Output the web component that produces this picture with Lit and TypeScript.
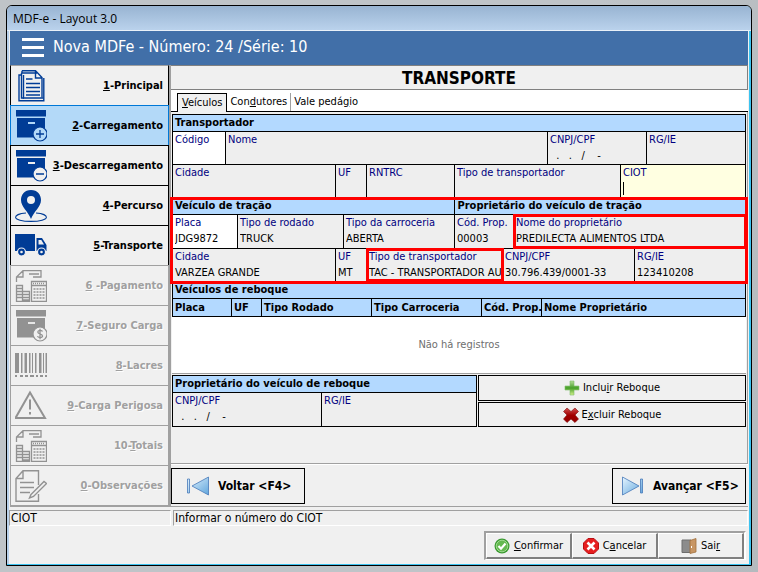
import { LitElement, html, css, svg, nothing, TemplateResult } from "lit";
import { customElement, property, state } from "lit/decorators.js";
import { classMap } from "lit/directives/class-map.js";

/* ---------- icons ---------- */

const calculatorIcon = svg`
  <g fill="none" stroke="currentColor" stroke-width="1.3">
    <path d="M1.5 12V7L8 .7H26V7H18M1.5 7H8V.7M14 4h10M19 7h7"/>
    <path d="M16.5 11.500h15v20h-15zM16.5 15.500h15"/>
    <path d="M1.5 15.500h6v16h-6zM1.5 18.500h6M1.5 21.500h6M1.5 24.500h13M1.5 27.500h13M7.5 21.500h7v10h-13M7.5 30h7"/>
    <path stroke-dasharray="2 1" d="M18.5 19h12M18.5 22h12M18.5 25h12M18.5 28h12"/>
    <path stroke-dasharray="1 1" d="M18 13.500h12"/>
  </g>`;

const box = svg`
  <path fill="currentColor" d="M1 0h30v6.500H1zM2 8h28v19.500H2z"/>
  <path stroke="var(--paper)" stroke-width="1.800" d="M13 13h7"/>`;

const badge = svg`<circle cx="25" cy="24" r="7" fill="var(--paper)" stroke="currentColor" stroke-width="1.200"/>`;

const icons: Record<string, TemplateResult> = {
  documents: svg`
    <g fill="none" stroke="currentColor" stroke-width="1.400">
      <path d="M7 .7H20.500L27 7.500V27.500M20.500 .7V8H27M7 .7V3"/>
      <path d="M22 3H6.500M6.500 3V28H9M6.500 5H4V30.800H28.800V8"/>
      <path d="M8.500 5V28H28.500"/>
      <path d="M11 9h6.500M11 13.500h14M11 17.500h14M11 21.500h14M11 25h14"/>
    </g>`,
  boxPlus: svg`${box}${badge}<path stroke="currentColor" stroke-width="1.300" d="M21 24h8M25 20v8"/>`,
  boxMinus: svg`${box}${badge}<path stroke="currentColor" stroke-width="1.300" d="M21 24h8"/>`,
  boxMoney: svg`${box}${badge}
    <path fill="none" stroke="currentColor" stroke-width="1.300" d="M27.500 21.500C27 20 22.800 20 22.800 22C22.800 24.500 27.500 23.500 27.500 26C27.500 28 23 28 22.500 26.200M25 18.800v10.400"/>`,
  pin: svg`
    <path fill="currentColor" fill-rule="evenodd" d="M16 0C9.500 0 6 4.800 6 10C6 17 13 21 16 29C19 21 26 17 26 10C26 4.800 22.500 0 16 0zM16 6a4 4 0 1 1 0 8a4 4 0 1 1 0-8z"/>
    <path fill="none" stroke="currentColor" stroke-width="1.100" d="M11 23C4 23.500 .600 25.500 .600 27.200C.600 29.500 7 31.400 16 31.400S31.400 29.500 31.400 27.200C31.400 25.500 28 23.500 21 23"/>`,
  truck: svg`
    <path fill="currentColor" d="M0 4h20v17H0zM21.500 8h5.500l4.500 7v6H21.500z"/>
    <path fill="var(--paper)" d="M23.500 10h2.800l2.700 4.500h-5.500z"/>
    <g fill="currentColor" stroke="var(--paper)" stroke-width="1.200"><circle cx="6.500" cy="22" r="4"/><circle cx="26.500" cy="22" r="4"/></g>
    <g fill="var(--paper)"><circle cx="6.500" cy="22" r="1.300"/><circle cx="26.500" cy="22" r="1.300"/></g>`,
  barcode: svg`
    <path fill="currentColor" d="M0 3h4v20H0zM6 3h1.500v20H6zM9.500 3h2.500v20H9.500zM14 3h1.500v20H14zM17 3h1v20h-1zM20 3h1.500v20H20zM24 3h2.500v20H24zM28 3h1v20h-1zM30.500 3h1.500v20h-1.500z"/>
    <path fill="currentColor" d="M0 25h2v2H0zM5 25h3v2H5zM10 25h3v2h-3zM15 25h4v2h-4zM21 25h2v2h-2zM25 25h3v2h-3zM30 25h2v2h-2z"/>`,
  warning: svg`
    <path fill="none" stroke="currentColor" stroke-width="2" d="M15 2.500L30 28H0.500Z"/>
    <path stroke="currentColor" stroke-width="2" d="M15 9.500v10M15 22v2.500"/>`,
  calculator: calculatorIcon,
  note: svg`
    <g fill="none" stroke="currentColor" stroke-width="1.400">
      <path d="M23.500 15V.800H8L1 8.500V31.300H23.500V24M8 .800V8.500H1"/>
      <path d="M5 12.500h14M5 17.500h14M5 22.500h10"/>
      <path d="M16 24.500L29 11.500L31.500 13.500L18.500 26.500L14.500 28z"/>
    </g>`,
};

/* ---------- data ---------- */

interface Step { before?: string; key: string; label: string; icon: string; enabled: boolean; }

const steps: Step[] = [
  { key: "1", label: "-Principal", icon: "documents", enabled: true },
  { key: "2", label: "-Carregamento", icon: "boxPlus", enabled: true },
  { key: "3", label: "-Descarregamento", icon: "boxMinus", enabled: true },
  { key: "4", label: "-Percurso", icon: "pin", enabled: true },
  { key: "5", label: "-Transporte", icon: "truck", enabled: true },
  { key: "6", label: " -Pagamento", icon: "calculator", enabled: false },
  { key: "7", label: "-Seguro Carga", icon: "boxMoney", enabled: false },
  { key: "8", label: "-Lacres", icon: "barcode", enabled: false },
  { key: "9", label: "-Carga Perigosa", icon: "warning", enabled: false },
  { before: "10-", key: "T", label: "otais", icon: "calculator", enabled: false },
  { key: "0", label: "-Observações", icon: "note", enabled: false },
];

interface Field { id: string; label: string; value?: string; editable?: boolean; focused?: boolean; marked?: boolean; }

const EMPTY_TAX_ID = "  .   .   /    -";

const carrierId: Field[] = [
  { id: "t-codigo", label: "Código", editable: true },
  { id: "t-nome", label: "Nome" },
  { id: "t-cnpj", label: "CNPJ/CPF", value: EMPTY_TAX_ID },
  { id: "t-rg", label: "RG/IE" },
];
const carrierData: Field[] = [
  { id: "t-cidade", label: "Cidade" },
  { id: "t-uf", label: "UF" },
  { id: "t-rntrc", label: "RNTRC" },
  { id: "t-tipo", label: "Tipo de transportador" },
  { id: "t-ciot", label: "CIOT", editable: true, focused: true },
];
const tractionVehicle: Field[] = [
  { id: "v-placa", label: "Placa", value: "JDG9872", editable: true },
  { id: "v-rodado", label: "Tipo de rodado", value: "TRUCK" },
  { id: "v-carroceria", label: "Tipo da carroceria", value: "ABERTA" },
  { id: "v-cod", label: "Cód. Prop.", value: "00003" },
  { id: "v-nome", label: "Nome do proprietário", value: "PREDILECTA ALIMENTOS LTDA", marked: true },
];
const tractionOwner: Field[] = [
  { id: "v-cidade", label: "Cidade", value: "VARZEA GRANDE" },
  { id: "v-uf", label: "UF", value: "MT" },
  { id: "v-tipo", label: "Tipo de transportador", value: "TAC - TRANSPORTADOR AU", marked: true },
  { id: "v-cnpj", label: "CNPJ/CPF", value: "30.796.439/0001-33" },
  { id: "v-rg", label: "RG/IE", value: "123410208" },
];
const trailerOwner: Field[] = [
  { id: "r-cnpj", label: "CNPJ/CPF", value: EMPTY_TAX_ID },
  { id: "r-rg", label: "RG/IE" },
];

/* ---------- sidebar ---------- */

@customElement("step-list")
export class StepList extends LitElement {
  @state() private current = 1;

  static styles = css`
    :host { display: block; }
    nav { display: flex; flex-direction: column; height: 100%; border-bottom: 1px solid #a0a0a0; box-sizing: border-box; }
    .step {
      --paper: #f0f0f0;
      display: flex; align-items: center; justify-content: space-between;
      height: 40px; flex: none; box-sizing: border-box; padding: 0 5px 0 4px; margin: 0;
      background: var(--paper); color: #003c96;
      border: 1px solid #000; border-bottom: 0;
      font: bold 11px/16px "DejaVu Sans Condensed", "DejaVu Sans", sans-serif;
    }
    .step:first-child { border-top-color: #a0a0a0; }
    .step.current { --paper: #b3d9f8; border-color: #0078d7; }
    .step:disabled { color: #929292; border-color: #a0a0a0; }
    .icon { width: 32px; height: 32px; flex: none; }
    .text { color: #000; white-space: pre; }
    .step:disabled .text { color: #a0a0a0; text-shadow: 1px 1px #fff; }
  `;

  render() {
    return html`<nav aria-label="Etapas">
      ${steps.map((s, i) => html`
        <button class=${classMap({ step: true, current: i === this.current })}
          ?disabled=${!s.enabled} @click=${() => (this.current = i)}>
          <svg class="icon" viewBox="0 0 32 32" aria-hidden="true">${icons[s.icon]}</svg>
          <span class="text">${s.before ?? nothing}<u>${s.key}</u>${s.label}</span>
        </button>`)}
    </nav>`;
  }
}

/* ---------- row of labelled fields ---------- */

@customElement("field-row")
export class FieldRow extends LitElement {
  @property({ attribute: false }) fields: Field[] = [];

  static styles = css`
    :host { display: grid; border-right: 1px solid #000; border-bottom: 1px solid #000; }
    .field {
      position: relative; min-width: 0; height: var(--field-height, 32px); box-sizing: border-box; padding-left: 2px;
      border-left: 1px solid #000; background: #eee;
    }
    .field.editable { background: #fff; }
    .field.focused { background: #ffffe1; }
    .marked { z-index: 1; }
    .marked::after {
      content: ""; position: absolute; inset: -1px -2px -1px -1px; border: 3px solid #f00; pointer-events: none;
    }
    label, input { display: block; font: 11px/16px "DejaVu Sans Condensed", "DejaVu Sans", sans-serif; height: 16px; white-space: pre; }
    label { color: #000080; }
    input { width: 100%; padding: 0; margin: 0; border: 0; background: none; color: #000; outline: none; height: 15px; }
    .caret { position: absolute; left: 2px; top: 17px; width: 1px; height: 13px; background: #000; }
  `;

  render() {
    return this.fields.map((f) => html`
      <div class=${classMap({ field: true, editable: !!f.editable, focused: !!f.focused, marked: !!f.marked })}>
        <label for=${f.id}>${f.label}</label>
        <input id=${f.id} .value=${f.value ?? ""} ?readonly=${!f.editable}>
        ${f.focused ? html`<span class="caret"></span>` : nothing}
      </div>`);
  }
}

/* ---------- application window ---------- */

@customElement("app-root")
export class AppRoot extends LitElement {
  static styles = css`
    :host {
      display: flex; box-sizing: border-box; min-height: 100vh; padding: 5px 6px 6px;
      background: linear-gradient(100deg, #bfc4c8 70%, #b4babe);
      font: 11px/16px "DejaVu Sans Condensed", "DejaVu Sans", sans-serif; color: #000;
    }
    button { font: inherit; color: inherit; margin: 0; cursor: default; }
    h1, h2 { margin: 0; font-weight: bold; }
    .window {
      flex: 1; min-width: 0; display: flex; flex-direction: column; box-sizing: border-box;
      border: 1px solid #000; border-radius: 6px 6px 0 0; background: #f0f0f0;
      box-shadow: inset -2px -1px #3cc3f0, inset 2px 0 #b9d1ea; overflow: hidden;
    }
    .titlebar {
      height: 24px; padding: 0 6px; background: linear-gradient(#98b4d2, #bad2ec);
      font: 12px/26px "Open Sans", "Noto Sans", sans-serif; border-bottom: 1px solid #e8f0f8;
    }
    .banner {
      display: flex; align-items: center; gap: 9px; height: 34px; margin: 0 3px; padding: 0 12px;
      background: #416fa8; color: #fff; box-sizing: border-box;
      font: 16px/30px "DejaVu Sans Condensed", "DejaVu Sans", sans-serif;
    }
    .banner-title { padding-bottom: 2px; }
    .menu { display: flex; padding: 0; border: 0; background: none; }
    .menu svg { width: 22px; height: 20px; }
    .body { display: grid; grid-template-columns: 159px minmax(0, 1fr); margin: 0 3px; border-bottom: 1px solid #a0a0a0; }
    .main { display: flex; flex-direction: column; border-left: 2px solid #a0a0a0; }
    .heading {
      height: 25px; box-sizing: border-box; border: 1px solid #808080; border-left: 0; text-align: center;
      font-size: 17px; line-height: 24px;
    }
    .tabs { display: flex; align-items: flex-end; height: 22px; box-sizing: border-box; padding-left: 6px; background: #fff; border-bottom: 1px solid #000; }
    .tab { height: 18px; padding: 0 3px; border: 0; background: none; line-height: 16px; }
    .tab.active { height: 19px; padding: 0 4px; margin-bottom: -1px; border: 1px solid #000; border-bottom: 0; background: #f0f0f0; }
    .tab.divided { border-left: 1px solid #a0a0a0; }
    .page { height: 352px; box-sizing: border-box; padding: 2px 1px 0; border-right: 1px solid #a0a0a0; border-bottom: 1px solid #a0a0a0; }
    .section { display: flex; height: 16px; border: 1px solid #000; background: #b3d9ff; }
    .section h2 { font-size: 11px; line-height: 16px; padding-left: 2px; }
    .carrier-id { grid-template-columns: 53fr 322fr 99fr 99fr; }
    .carrier-data { grid-template-columns: 163fr 31fr 88fr 166fr 125fr; }
    .vehicle { grid-template-columns: 65fr 106fr 111fr 59fr 232fr; --field-height: 33px; }
    .owner { grid-template-columns: 163fr 31fr 136fr 132fr 111fr; }
    .trailer-data { grid-template-columns: 149fr 155fr; --field-height: 33px; }
    .traction { position: relative; }
    .traction::after { content: ""; position: absolute; z-index: 2; inset: -1px -2px -2px; border: 3px solid #f00; pointer-events: none; }
    .section.split { display: grid; grid-template-columns: 281fr 290fr; }
    .split h2 + h2 { border-left: 1px solid #000; }
    .merged { border-top: 0; }
    table { width: 100%; table-layout: fixed; border-spacing: 0; background: #fff; border-bottom: 1px solid #a0a0a0; }
    th {
      height: 17px; padding: 0 0 0 2px; box-sizing: content-box; text-align: left; white-space: nowrap;
      font-size: 11px; line-height: 17px; background: #b3d9ff; border-left: 1px solid #000; border-bottom: 1px solid #000;
    }
    th:last-child { border-right: 1px solid #000; }
    td { height: 56px; padding: 0; text-align: center; color: #6e6e6e; }
    .c-plate { width: 59px; } .c-uf { width: 30px; } .c-type { width: 110px; } .c-code { width: 60px; }
    .trailer { display: grid; grid-template-columns: 305fr 268fr; column-gap: 1px; margin-top: 1px; }
    .actions { display: grid; row-gap: 1px; grid-template-rows: 26px 25px; }
    .action { display: flex; align-items: center; justify-content: center; gap: 3px; padding: 0; border: 1px solid #000; background: #f0f0f0; }
    .pager { display: flex; justify-content: space-between; padding: 3px 2px 2px 0; border-top: 1px solid #fff; }
    .page-btn {
      display: flex; align-items: center; gap: 8px; height: 36px; box-sizing: border-box;
      width: 134px; padding: 0 0 0 14px; border: 1px solid #000; background: #f0f0f0; font-weight: bold; font-size: 12px;
    }
    .page-btn.next { padding-left: 8px; }
    .i16 { width: 16px; height: 16px; flex: none; }
    .i24 { width: 24px; height: 24px; flex: none; }
    .status { display: grid; grid-template-columns: 162px minmax(0, 1fr); column-gap: 2px; margin: 3px 3px 0 2px; }
    .status output {
      height: 16px; box-sizing: border-box; padding-left: 1px; font-size: 12px; line-height: 14px;
      border: 1px solid #a0a0a0; border-right-color: #fff; border-bottom-color: #fff;
    }
    .footer { display: flex; justify-content: flex-end; padding: 5px; }
    .group { display: grid; grid-template-columns: repeat(3, 86px); border: 2px solid #a0a0a0; border-right: 2px solid #fff; border-bottom: 1px solid #fff; }
    .cmd {
      display: flex; align-items: center; justify-content: center; gap: 4px; height: 26px; padding: 0; box-sizing: border-box;
      background: #f0f0f0; border: 1px solid #fff; border-right: 2px solid #808080; border-bottom: 2px solid #808080;
    }
  `;

  private tab(active: boolean, divided: boolean, label: TemplateResult) {
    return html`<button role="tab" aria-selected=${active} class=${classMap({ tab: true, active, divided })}>${label}</button>`;
  }

  render() {
    return html`
      <div class="window">
        <div class="titlebar">MDF-e - Layout 3.0</div>
        <header class="banner">
          <button class="menu" aria-label="Menu">
            <svg viewBox="0 0 22 20"><path stroke="#fff" stroke-width="3" d="M0 1.500h22M0 9.500h22M0 17.500h22"/></svg>
          </button>
          <span class="banner-title">Nova MDFe - Número: 24 /Série: 10</span>
        </header>
        <div class="body">
          <step-list></step-list>
          <main class="main">
            <h1 class="heading">TRANSPORTE</h1>
            <div class="tabs" role="tablist">
              ${this.tab(true, false, html`<u>V</u>eículos`)}
              ${this.tab(false, false, html`Con<u>d</u>utores`)}
              ${this.tab(false, true, html`Vale pedá<u>g</u>io`)}
            </div>
            <div class="page">
              <section>
                <div class="section"><h2>Transportador</h2></div>
                <field-row class="carrier-id" .fields=${carrierId}></field-row>
                <field-row class="carrier-data" .fields=${carrierData}></field-row>
              </section>
              <section class="traction">
                <div class="section split merged"><h2>Veículo de tração</h2><h2>Proprietário do veículo de tração</h2></div>
                <field-row class="vehicle" .fields=${tractionVehicle}></field-row>
                <field-row class="owner" .fields=${tractionOwner}></field-row>
              </section>
              <section>
                <div class="section merged"><h2>Veículos de reboque</h2></div>
                <table>
                  <colgroup><col class="c-plate"><col class="c-uf"><col class="c-type"><col class="c-type"><col class="c-code"><col></colgroup>
                  <thead><tr>
                    <th>Placa</th><th>UF</th><th>Tipo Rodado</th><th>Tipo Carroceria</th><th>Cód. Prop.</th><th>Nome Proprietário</th>
                  </tr></thead>
                  <tbody><tr><td colspan="6">Não há registros</td></tr></tbody>
                </table>
              </section>
              <div class="trailer">
                <section>
                  <div class="section"><h2>Proprietário do veículo de reboque</h2></div>
                  <field-row class="trailer-data" .fields=${trailerOwner}></field-row>
                </section>
                <div class="actions">
                  <button class="action">
                    <svg class="i16" viewBox="0 0 16 16" aria-hidden="true">
                      <defs><linearGradient id="plus" x2="0" y2="1"><stop stop-color="#b4dc96"/><stop offset=".5" stop-color="#46a028"/><stop offset="1" stop-color="#d2f08c"/></linearGradient></defs>
                      <path fill="url(#plus)" stroke="#7dbe69" stroke-width=".6" d="M6 1h4v5h5v4h-5v5H6v-5H1V6h5z"/>
                    </svg>
                    <span>Inclu<u>i</u>r Reboque</span>
                  </button>
                  <button class="action">
                    <svg class="i16" viewBox="0 0 16 16" aria-hidden="true">
                      <defs><linearGradient id="cross" x2="0" y2="1"><stop stop-color="#d25050"/><stop offset=".5" stop-color="#a00000"/><stop offset="1" stop-color="#960000"/></linearGradient></defs>
                      <path fill="url(#cross)" stroke="#7d0a0a" stroke-width=".6" d="M4 1l4 3.500L12 1l3.500 3.500L12 8l3.500 4L12 15.500L8 12l-4 3.500L.5 12L4 8L.5 4.500z"/>
                    </svg>
                    <span>E<u>x</u>cluir Reboque</span>
                  </button>
                </div>
              </div>
            </div>
            <div class="pager">
              <button class="page-btn">
                <svg class="i24" viewBox="0 0 24 24" aria-hidden="true">
                  <defs><linearGradient id="arrow" x2="1" y2="1"><stop stop-color="#e6f5ff"/><stop offset="1" stop-color="#5fa5dc"/></linearGradient></defs>
                  <path fill="url(#arrow)" stroke="#4678b9" stroke-width=".8" d="M22.500 3v18L6 12zM1.500 5h2v14h-2z"/>
                </svg>
                <span>Voltar &lt;F4&gt;</span>
              </button>
              <button class="page-btn next">
                <svg class="i24" viewBox="0 0 24 24" aria-hidden="true">
                  <defs><linearGradient id="arrow2" x2="1" y2="1"><stop stop-color="#e6f5ff"/><stop offset="1" stop-color="#5fa5dc"/></linearGradient></defs>
                  <path fill="url(#arrow2)" stroke="#4678b9" stroke-width=".8" d="M1.500 3v18L18 12zM19.500 5h2v14h-2z"/>
                </svg>
                <span>Avançar &lt;F5&gt;</span>
              </button>
            </div>
          </main>
        </div>
        <div class="status"><output>CIOT</output><output>Informar o número do CIOT</output></div>
        <footer class="footer">
          <div class="group">
            <button class="cmd">
              <svg class="i16" viewBox="0 0 16 16" aria-hidden="true">
                <circle cx="8" cy="8" r="7.500" fill="#3c9b32"/><circle cx="8" cy="8" r="5.800" fill="#64b950" stroke="#b4e6a5" stroke-width=".8"/>
                <path fill="none" stroke="#fff" stroke-width="2.200" d="M4.500 8l2.500 2.700L11.500 5.500"/>
              </svg>
              <span><u>C</u>onfirmar</span>
            </button>
            <button class="cmd">
              <svg class="i16" viewBox="0 0 16 16" aria-hidden="true">
                <path fill="#e61e1e" stroke="#b90f14" d="M5 .500h6l4.500 4.500v6L11 15.500H5L.5 11V5z"/>
                <path stroke="#fff" stroke-width="2.600" d="M4.500 4.500l7 7M11.500 4.500l-7 7"/>
              </svg>
              <span>C<u>a</u>ncelar</span>
            </button>
            <button class="cmd">
              <svg class="i16" viewBox="0 0 16 16" aria-hidden="true">
                <path fill="#8c8c8c" stroke="#6e6e6e" d="M1 2h9v12.500H1z"/>
                <path fill="#c89664" stroke="#a0703c" stroke-width=".8" d="M9 2.500L15 .500V14L9 15.500z"/>
                <path stroke="#fff" d="M10.500 8v2"/>
              </svg>
              <span>Sai<u>r</u></span>
            </button>
          </div>
        </footer>
      </div>`;
  }
}
